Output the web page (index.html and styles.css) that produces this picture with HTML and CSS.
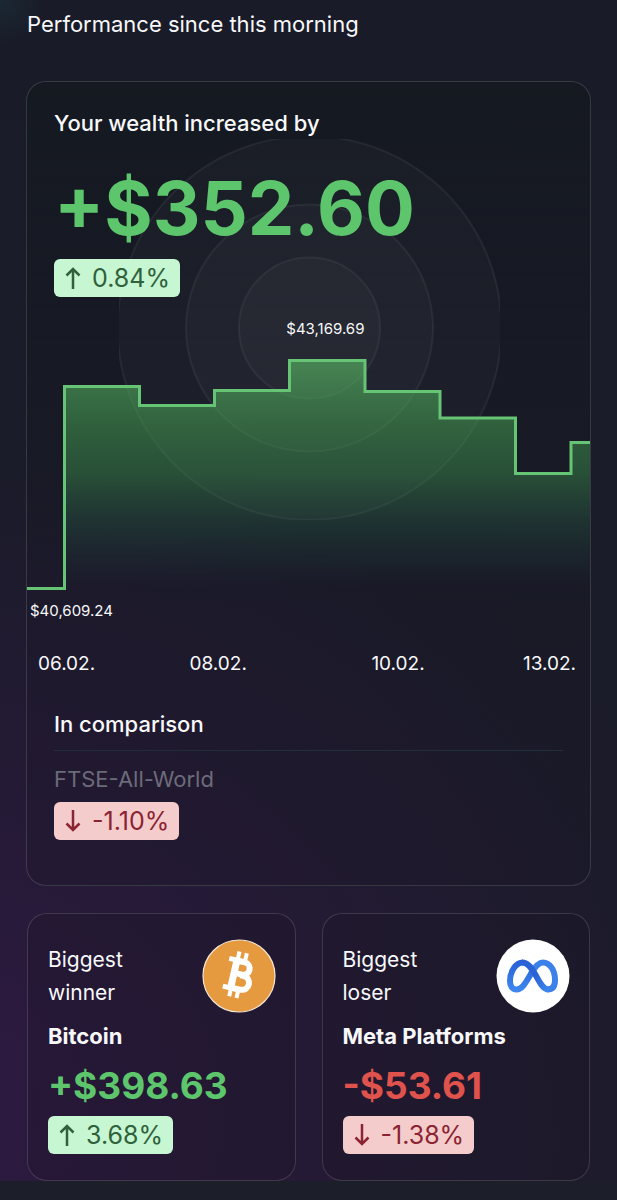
FILE: index.html
```html
<!DOCTYPE html>
<html lang="en">
<head>
<meta charset="utf-8">
<meta name="viewport" content="width=device-width, initial-scale=1">
<title>Performance</title>
<link rel="stylesheet" href="styles.css">
</head>
<body>
<svg class="defs" width="0" height="0" aria-hidden="true">
  <symbol id="arrow-up" viewBox="0 0 16 24"><path d="M8 23V3M1.500 9.500 8 3l6.500 6.500" fill="none" stroke="currentColor" stroke-width="2.500"/></symbol>
  <symbol id="arrow-down" viewBox="0 0 16 24"><path d="M8 1v20M1.500 14.500 8 21l6.500-6.500" fill="none" stroke="currentColor" stroke-width="2.500"/></symbol>
</svg>
<main class="page">
  <h1 class="page-title">Performance since this morning</h1>

  <section class="card wealth">
    <svg class="rings" viewBox="0 0 381 381" aria-hidden="true">
      <circle cx="190.500" cy="189" r="192"/>
      <circle cx="190.500" cy="189" r="123.500"/>
      <circle cx="190.500" cy="189" r="70.500"/>
    </svg>
    <div class="summary">
      <h2 class="label">Your wealth increased by</h2>
      <p class="total gain">+$352.60</p>
      <span class="badge badge-up"><svg class="arrow" aria-hidden="true"><use href="#arrow-up"/></svg>0.84%</span>
    </div>
    <div class="chart">
      <svg class="plot" viewBox="0 0 563 240" preserveAspectRatio="none" role="img" aria-label="Wealth from 06.02. to 13.02.">
        <defs>
          <linearGradient id="fade" gradientUnits="userSpaceOnUse" x1="0" y1="5" x2="0" y2="233">
            <stop offset="0" stop-color="#5dc269" stop-opacity=".6"/>
            <stop offset=".3" stop-color="#46a552" stop-opacity=".5"/>
            <stop offset=".5" stop-color="#3f9a50" stop-opacity=".42"/>
            <stop offset=".75" stop-color="#2a6a4c" stop-opacity=".26"/>
            <stop offset="1" stop-color="#204f48" stop-opacity="0"/>
          </linearGradient>
        </defs>
        <path fill="url(#fade)" d="M37.500 233V31.500H112.500V50.500H187.500V35.500H262.500V5.500H338V36.500H413V63H488.500V118.500H544V87.500H563V233Z"/>
        <path class="line" d="M0 233.500H37.500V31.500H112.500V50.500H187.500V35.500H262.500V5.500H338V36.500H413V63H488.500V118.500H544V87.500H563"/>
      </svg>
      <span class="mark mark-high">$43,169.69</span>
      <span class="mark mark-low">$40,609.24</span>
    </div>
    <div class="axis"><span>06.02.</span><span>08.02.</span><span>10.02.</span><span>13.02.</span></div>
    <div class="comparison">
      <h2 class="label label-ruled">In comparison</h2>
      <p class="index-name">FTSE-All-World</p>
      <span class="badge badge-down"><svg class="arrow" aria-hidden="true"><use href="#arrow-down"/></svg>-1.10%</span>
    </div>
  </section>

  <div class="movers">
    <section class="card mover">
      <div class="mover-head">
        <h2 class="mover-label">Biggest winner</h2>
        <svg class="logo" viewBox="0 0 74 74" role="img" aria-label="Bitcoin">
          <circle cx="37" cy="37" r="36" fill="#e59a40" stroke="#f6e6d4" stroke-width="1.200"/>
          <g transform="rotate(13 37 37)" fill="none" stroke="#fff">
            <path stroke-width="5" d="M23.500 22h14M23.500 50.500h14"/>
            <path stroke-width="7" d="M31.500 20v32"/>
            <path stroke-width="6" d="M30 22.500h9.500c8.500 0 8.500 12.500 0 12.500H31M38 36h3c10 0 10 14 0 14H30"/>
            <path stroke-width="4" d="M32 13v9M39.500 13v9M32 50v9M39.500 50v9"/>
          </g>
        </svg>
      </div>
      <p class="mover-name">Bitcoin</p>
      <p class="amount gain">+$398.63</p>
      <span class="badge badge-up"><svg class="arrow" aria-hidden="true"><use href="#arrow-up"/></svg>3.68%</span>
    </section>
    <section class="card mover">
      <div class="mover-head">
        <h2 class="mover-label">Biggest loser</h2>
        <svg class="logo" viewBox="0 0 74 74" role="img" aria-label="Meta">
          <defs>
            <linearGradient id="meta-left" x1="0" y1="0" x2="0" y2="1"><stop offset="0" stop-color="#2b62d6"/><stop offset="1" stop-color="#3c86ee"/></linearGradient>
            <linearGradient id="meta-cross" x1="0" y1="0" x2="1" y2="1"><stop offset=".5" stop-color="#2b62d6"/><stop offset="1" stop-color="#3c86ee"/></linearGradient>
          </defs>
          <circle cx="37" cy="37" r="36.500" fill="#fff"/>
          <g fill="none" stroke-width="6">
            <path stroke="#3c80ea" d="M51.500 50.500c5.500 0 7.500-4 7.500-9.500 0-9.500-5-17.500-12-17.500-5 0-8.500 5-12 11"/>
            <path stroke="url(#meta-left)" d="M27 23.500C19.500 23.500 14 33 14 42c0 5 2 8.500 6.500 8.500 6 0 9-6.500 16.500-19"/>
            <path stroke="url(#meta-cross)" d="M26 23.500c5.500 0 9 4.500 13 11.500 4.500 7.500 7.500 15.500 13.500 15.500"/>
          </g>
        </svg>
      </div>
      <p class="mover-name">Meta Platforms</p>
      <p class="amount loss">-$53.61</p>
      <span class="badge badge-down"><svg class="arrow" aria-hidden="true"><use href="#arrow-down"/></svg>-1.38%</span>
    </section>
  </div>
</main>
</body>
</html>
```
FILE: styles.css
```css
* { box-sizing: border-box; }
html { background: #1c1e29; }
body {
  margin: 0;
  font-family: Inter, "Liberation Sans", sans-serif;
  color: #f8f8fa;
}
h1, h2, p { margin: 0; font-weight: 400; }
.defs { position: absolute; }

.page {
  padding: 8px 26px 0;
  background:
    radial-gradient(circle at 0 0, rgba(30, 58, 68, .4), transparent 44px),
    radial-gradient(ellipse 760px 660px at -60px 94%, rgba(58, 24, 82, .6), transparent),
    linear-gradient(to bottom, #191c28, #1c1b2a);
}
.page-title {
  padding-left: 1px;
  font-size: 22px;
  line-height: 32px;
}

.card {
  border: 1px solid rgba(255, 255, 255, .14);
  border-radius: 20px;
}
.wealth {
  position: relative;
  margin-top: 41px;
  padding-bottom: 45px;
  background: linear-gradient(to bottom, rgba(20, 25, 32, .8), rgba(24, 22, 34, .2) 65%);
}
.rings {
  position: absolute;
  top: 57px;
  left: 50%;
  width: 381px;
  margin-left: -190px;
  overflow: hidden;
}
.rings circle {
  fill: rgba(255, 255, 255, .022);
  stroke: rgba(255, 255, 255, .06);
  stroke-width: 2;
}
.summary, .comparison { position: relative; padding: 0 27px; }
.summary { padding-top: 25px; }
.label { font-size: 22px; line-height: 32px; font-weight: 500; }
.total {
  margin: 23px 0 5px;
  font-size: 74px;
  line-height: 92px;
  font-weight: 700;
}
.gain { color: #5dc66d; }
.loss { color: #e0534d; }

.badge {
  display: inline-flex;
  align-items: center;
  gap: 11px;
  height: 38px;
  padding: 0 10px 0 11px;
  border-radius: 6px;
  font-size: 25px;
  vertical-align: top;
}
.arrow { width: 16px; height: 24px; }
.badge-up { background: #c7f6d2; color: #2f613b; }
.badge-down { background: #f5cccc; color: #8b2432; }

.chart { position: relative; margin-top: 58px; }
.plot { display: block; width: 100%; height: 240px; }
.line {
  fill: none;
  stroke: #66c475;
  stroke-width: 3;
  vector-effect: non-scaling-stroke;
}
.mark {
  position: absolute;
  font-size: 15px;
  line-height: 20px;
}
.mark-high { top: -36px; left: 53%; transform: translateX(-50%); }
.mark-low { top: 246px; left: 3px; }

.axis {
  display: grid;
  grid-template-columns: 5fr 6fr 5fr auto;
  padding: 0 14px 0 11px;
  margin-top: 57px;
  font-size: 19px;
  line-height: 24px;
}

.comparison { padding-top: 32px; }
.label-ruled {
  padding-bottom: 10px;
  border-bottom: 1px solid #1f303c;
}
.index-name {
  margin: 12px 0 7px;
  font-size: 22px;
  line-height: 32px;
  color: #6c6b79;
}

.movers {
  display: grid;
  grid-template-columns: 1fr 1fr;
  gap: 26px;
  padding: 0 1px;
  margin-top: 27px;
}
.mover {
  padding: 25px 19px 26px 20px;
  background: rgba(22, 20, 30, .25);
}
.mover-head {
  display: flex;
  justify-content: space-between;
  align-items: center;
}
.mover-label { width: 100px; font-size: 21px; line-height: 33px; }
.logo { width: 74px; height: 74px; }
.mover-name {
  margin-top: 8px;
  font-size: 22px;
  line-height: 30px;
  font-weight: 700;
}
.amount {
  margin: 11px 0 6px;
  font-size: 37px;
  line-height: 48px;
  font-weight: 700;
}
```
